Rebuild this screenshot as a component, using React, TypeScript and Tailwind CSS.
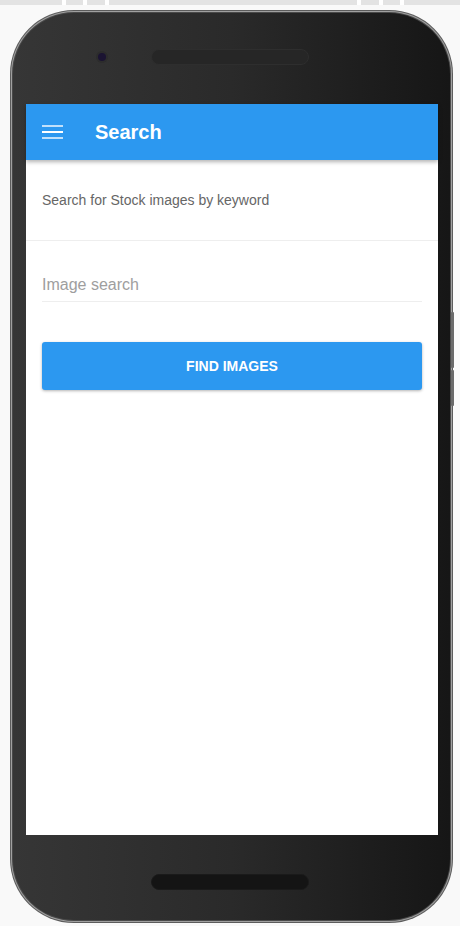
import { useState } from "react";

export default function App() {
  const [query, setQuery] = useState("");

  return (
    <div className="w-[460px] h-[926px] bg-[#f9f9f9] overflow-hidden font-['Liberation_Sans',Arial,sans-serif]">
      {/* browser strip */}
      <div className="h-[5px] bg-[#e3e3e3] flex">
        <div className="w-[62px]" />
        <div className="w-[4px] bg-white" />
        <div className="w-[17px]" />
        <div className="w-[4px] bg-white" />
        <div className="w-[18px]" />
        <div className="w-[4px] bg-white" />
        <div className="w-[248px]" />
        <div className="w-[4px] bg-white" />
        <div className="w-[18px]" />
        <div className="w-[4px] bg-white" />
        <div className="w-[17px]" />
        <div className="w-[4px] bg-white" />
      </div>

      {/* phone */}
      <div className="relative ml-[10px] mt-[5px] w-[443px] h-[913px] rounded-[64px] bg-[#5c5c5c] p-[1px]">
        <div className="w-full h-full rounded-[63px] bg-[#a0a0a0] p-[1px]">
          <div className="w-full h-full rounded-[62px] bg-[#4a4a4a] p-[1px]">
            <div className="w-full h-full rounded-[61px] bg-linear-to-r from-[#363636] via-[#2a2a2a] to-[#161616] flex flex-col">
              {/* top bezel */}
              <div className="h-[91px] pt-[36px]">
                <div className="h-[16px] flex items-center">
                  <div className="ml-[83px] w-[12px] h-[12px] rounded-full bg-[#2c2c2c] flex items-center justify-center">
                    <div className="w-[8px] h-[8px] rounded-full bg-[#1b1432]" />
                  </div>
                  <div className="ml-[43px] w-[158px] h-[16px] rounded-full bg-[#262626] border border-[#2e2e2e]" />
                </div>
              </div>

              {/* screen */}
              <div className="ml-[13px] w-[412px] h-[731px] bg-white flex flex-col">
                <div className="h-[56px] bg-[#2c98f0] flex items-center shadow-[0_2px_4px_rgba(0,0,0,0.3)] relative z-10">
                  <div className="ml-[16px] w-[21px] flex flex-col gap-[4px]">
                    <div className="h-[2px] bg-white/70" />
                    <div className="h-[2px] bg-white" />
                    <div className="h-[2px] bg-white/70" />
                  </div>
                  <h1 className="ml-[32px] text-[20px] font-bold text-white leading-none">
                    Search
                  </h1>
                </div>

                <div className="px-[16px] pt-[30px] pb-[30px] border-b border-[#eeeeee]">
                  <p className="text-[14px] leading-[20px] text-[#666666]">
                    Search for Stock images by keyword
                  </p>
                </div>

                <div className="px-[16px] pt-[31px]">
                  <input
                    type="text"
                    value={query}
                    onChange={(e) => setQuery(e.target.value)}
                    placeholder="Image search"
                    className="w-full h-[30px] pb-[3px] text-[16px] text-[#333] placeholder:text-[#9e9e9e] border-b border-[#eeeeee] outline-none bg-transparent"
                  />
                  <button className="mt-[40px] w-full h-[48px] rounded-[3px] bg-[#2c98f0] text-white text-[14px] font-bold shadow-[0_1px_3px_rgba(0,0,0,0.3)]">
                    FIND IMAGES
                  </button>
                </div>
              </div>

              {/* bottom bezel */}
              <div className="pt-[39px] flex">
                <div className="ml-[138px] w-[158px] h-[16px] rounded-full bg-[#141414] border border-[#1a1a1a]" />
              </div>
            </div>
          </div>
        </div>

        {/* side buttons */}
        <div className="absolute right-[-1px] top-[302px] w-[3px] h-[56px] bg-[#6a6a6a] rounded-[1px]" />
        <div className="absolute right-[-1px] top-[360px] w-[3px] h-[36px] bg-[#6a6a6a] rounded-[1px]" />
      </div>
    </div>
  );
}
